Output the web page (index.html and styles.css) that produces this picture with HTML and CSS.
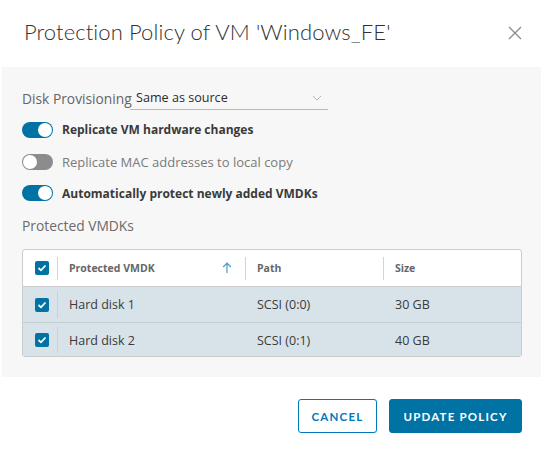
FILE: index.html
```html
<!DOCTYPE html>
<html>
<head>
<meta charset="utf-8">
<link rel="stylesheet" href="styles.css">
</head>
<body>
<div class="modal">
  <div class="header">
    <h1 class="title">Protection Policy of VM 'Windows_FE'</h1>
    <svg class="close" width="14" height="14" viewBox="0 0 14 14"><path d="M1 1 L13 13 M13 1 L1 13" stroke="#8a8a8a" stroke-width="1.3" fill="none"/></svg>
  </div>
  <div class="panel">
    <div class="field">
      <span class="field-label">Disk Provisioning</span>
      <div class="select">
        <span>Same as source</span>
        <svg width="10" height="6" viewBox="0 0 10 6"><path d="M1 1 L5 5 L9 1" stroke="#b5b5b5" stroke-width="1" fill="none"/></svg>
      </div>
    </div>
    <div class="toggle-row on">
      <span class="toggle"><span class="knob"></span></span>
      <span class="toggle-label">Replicate VM hardware changes</span>
    </div>
    <div class="toggle-row off">
      <span class="toggle"><span class="knob"></span></span>
      <span class="toggle-label">Replicate MAC addresses to local copy</span>
    </div>
    <div class="toggle-row on">
      <span class="toggle"><span class="knob"></span></span>
      <span class="toggle-label">Automatically protect newly added VMDKs</span>
    </div>
    <div class="section-label">Protected VMDKs</div>
    <div class="grid">
      <div class="row head">
        <div class="cell check"><span class="cb"><svg width="10" height="8" viewBox="0 0 10 8"><path d="M1.5 4 L4 6.3 L8.5 1.5" stroke="#fff" stroke-width="1.8" fill="none"/></svg></span></div>
        <div class="cell c1"><span>Protected VMDK</span><svg class="sort" width="10" height="12" viewBox="0 0 10 12"><path d="M5 11 V1.5 M1.2 5 L5 1.2 L8.8 5" stroke="#4a9cc4" stroke-width="1.2" fill="none"/></svg></div>
        <div class="cell c2">Path</div>
        <div class="cell c3">Size</div>
      </div>
      <div class="row sel">
        <div class="cell check"><span class="cb"><svg width="10" height="8" viewBox="0 0 10 8"><path d="M1.5 4 L4 6.3 L8.5 1.5" stroke="#fff" stroke-width="1.8" fill="none"/></svg></span></div>
        <div class="cell c1">Hard disk 1</div>
        <div class="cell c2">SCSI (0:0)</div>
        <div class="cell c3">30 GB</div>
      </div>
      <div class="row sel">
        <div class="cell check"><span class="cb"><svg width="10" height="8" viewBox="0 0 10 8"><path d="M1.5 4 L4 6.3 L8.5 1.5" stroke="#fff" stroke-width="1.8" fill="none"/></svg></span></div>
        <div class="cell c1">Hard disk 2</div>
        <div class="cell c2">SCSI (0:1)</div>
        <div class="cell c3">40 GB</div>
      </div>
    </div>
  </div>
  <div class="footer">
    <button class="btn outline">CANCEL</button>
    <button class="btn primary">UPDATE POLICY</button>
  </div>
</div>
</body>
</html>
```

FILE: styles.css
```css
html, body {
  margin: 0;
  padding: 0;
  background: #fff;
}
body {
  font-family: "Open Sans", Lato, sans-serif;
  color: #333;
  width: 544px;
  height: 456px;
  overflow: hidden;
}
.modal {
  display: flex;
  flex-direction: column;
}
.header {
  height: 67px;
  display: flex;
  align-items: center;
  justify-content: space-between;
  padding: 0 22px 0 24px;
  box-sizing: border-box;
}
.title {
  margin: 0;
  font-family: Lato, "Open Sans", sans-serif;
  font-weight: 300;
  font-size: 22px;
  color: #313131;
  letter-spacing: 0.1px;
  position: relative;
  top: -2px;
}
.close {
  position: relative;
  top: -1px;
}
.panel {
  margin: 0 3px 0 2px;
  background: #f7f7f7;
  padding: 19px 19px 20px 20px;
  display: flex;
  flex-direction: column;
  height: 310px;
  box-sizing: border-box;
}
.field {
  display: flex;
  align-items: center;
  height: 24px;
}
.field-label {
  font-size: 13.8px;
  color: #666;
  width: 108px;
  white-space: nowrap;
}
.select {
  width: 198px;
  height: 24px;
  box-sizing: border-box;
  border-bottom: 1px solid #b9b9b9;
  display: flex;
  align-items: center;
  justify-content: space-between;
  padding: 0 6px 0 6px;
  font-size: 12.6px;
  color: #2b2b2b;
}
.toggle-row {
  display: flex;
  align-items: center;
  height: 32px;
}
.field + .toggle-row {
  margin-top: 4px;
}
.toggle {
  width: 31px;
  height: 16px;
  border-radius: 8px;
  box-sizing: border-box;
  margin-right: 9px;
  position: relative;
  flex-shrink: 0;
}
.knob {
  position: absolute;
  top: 1px;
  width: 14px;
  height: 14px;
  border-radius: 50%;
  background: #fff;
  box-sizing: border-box;
}
.on .toggle {
  background: #0072a3;
}
.on .knob {
  right: 1px;
}
.off .toggle {
  background: #8c8c8c;
}
.off .knob {
  left: 1px;
}
.toggle-label {
  font-size: 12px;
}
.on .toggle-label {
  font-weight: 700;
  color: #3a3a3a;
}
.off .toggle-label {
  font-size: 13px;
  color: #7a7a7a;
}
.section-label {
  font-size: 13.8px;
  color: #6b6b6b;
  margin-top: 8px;
  height: 18px;
  line-height: 18px;
}
.grid {
  margin-top: 14px;
  background: #fff;
  border: 1px solid #ccc;
  border-radius: 3px;
  overflow: hidden;
  width: 500px;
  box-sizing: border-box;
}
.row {
  display: flex;
  height: 35px;
  align-items: stretch;
  box-sizing: border-box;
}
.row.head {
  height: 37px;
  border-bottom: 1px solid #ccc;
}
.row.sel {
  background: #d8e3e9;
}
.row.sel + .row.sel {
  border-top: 1px solid #c3cdd3;
}
.cell {
  display: flex;
  align-items: center;
  box-sizing: border-box;
  font-size: 12.5px;
  color: #3a3a3a;
  position: relative;
}
.cell.check {
  width: 34px;
  justify-content: center;
  padding-left: 3px;
}
.c1 { width: 188px; padding: 0 12px 0 12px; justify-content: space-between; }
.c2 { width: 138px; padding-left: 12px; }
.c3 { flex: 1; padding-left: 12px; }
.head .cell {
  font-size: 10.5px;
  font-weight: 700;
  color: #666;
}
.head .cell + .cell::before {
  content: "";
  position: absolute;
  left: 0;
  top: 7px;
  bottom: 6px;
  width: 1px;
  background: #d4d4d4;
}
.sel .c1::before {
  content: "";
  position: absolute;
  left: 0;
  top: 4px;
  bottom: 4px;
  width: 1px;
  background: #c6d2d9;
}
.sort {
  margin-right: 1px;
}
.cb {
  width: 14px;
  height: 14px;
  border-radius: 2px;
  background: #0072a3;
  display: flex;
  align-items: center;
  justify-content: center;
}
.footer {
  display: flex;
  justify-content: flex-end;
  gap: 12px;
  padding: 22px 22px 0 0;
}
.btn {
  height: 34px;
  box-sizing: border-box;
  border-radius: 3px;
  font-family: Lato, "Open Sans", sans-serif;
  font-size: 11.5px;
  font-weight: 700;
  letter-spacing: 1.2px;
  padding: 0 12px;
  cursor: pointer;
}
.btn.outline {
  width: 79px;
  background: #fff;
  border: 1px solid #0079b8;
  color: #0079b8;
}
.btn.primary {
  width: 133px;
  background: #0072a3;
  border: 1px solid #0072a3;
  color: #fff;
}
```
